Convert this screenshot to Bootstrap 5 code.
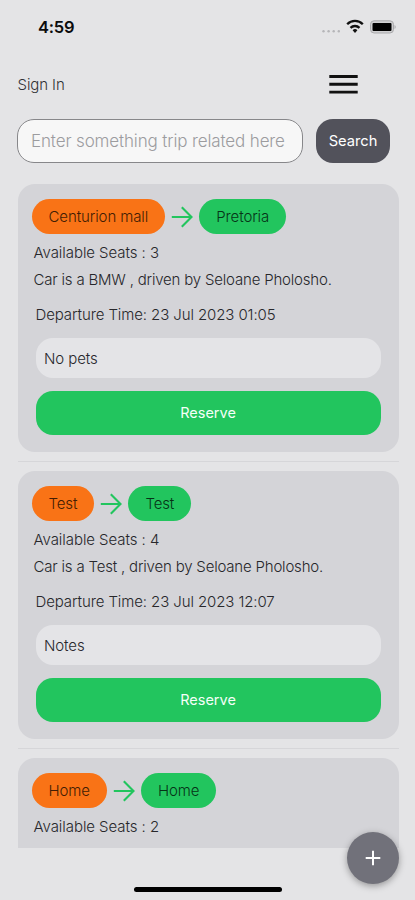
<!DOCTYPE html>
<html lang="en">
<head>
<meta charset="utf-8">
<meta name="viewport" content="width=device-width, initial-scale=1">
<title>Trips</title>
<link href="https://cdn.jsdelivr.net/npm/bootstrap@5.3.0/dist/css/bootstrap.min.css" rel="stylesheet">
<style>
body { font-family: Inter, "Liberation Sans", sans-serif; font-size: 15px; font-weight: 300; letter-spacing: -.1px; line-height: 20px; background: #e4e4e6; color: #27272b; }
.screen { width: 415px; height: 900px; }
.status-bar { height: 62px; padding: 17px 19px 0 38px; color: #0c0c0d; }
.clock { font-size: 16.5px; font-weight: 600; letter-spacing: -.25px; }
.page-head { height: 57px; padding: 0 57px 0 17.5px; }
.sign-in { color: #303034; padding-top: 13px; }
.search-row { padding: 0 25px 0 17px; gap: 13px; height: 44px; }
.search-box { background: #f7f7f7; border: 1px solid #87878a; border-radius: 17px; font-size: 17px; font-weight: 300; letter-spacing: -.13px; padding: 0 13px; height: 44px; }
.search-box:focus { background: #f7f7f7; }
.search-box::placeholder { color: #9c9c9f; opacity: 1; }
.search-btn { width: 74px; height: 44px; border-radius: 17px; background: #52525b; color: #fff; font-size: 14.7px; letter-spacing: 0; }
.trip-list { margin: 21px 16.5px 0 17.5px; height: 663.5px; }
.trip { background: #d4d4d8; border-radius: 17px; height: 268px; padding: 15px 18px 17px 14px; }
.divider { height: 1px; background: #d6d6d9; margin: 9px 0; }
.route { gap: 6px; }
.place { height: 35px; border-radius: 17.5px; padding: 0 17px; }
.from { background: #f97316; color: #421d04; }
.to { background: #22c55e; color: #063317; }
.seats { margin: 9px 0 0 2px; letter-spacing: -.06px; }
.driver { margin: 7px 0 0 2px; letter-spacing: -.19px; }
.departure { margin: 15px 0 0 4px; }
.note { margin: 13px 0 0 4px; height: 40px; border-radius: 17px; background: #e4e4e7; padding: 1px 8.5px 0; }
.reserve { margin: 13px 0 0 4px; height: 44px; border-radius: 17px; background: #22c55e; color: #f4fff8; font-size: 14.5px; letter-spacing: 0; }
.add-btn { right: 16px; bottom: 16px; width: 52px; height: 52px; background: #71717a; box-shadow: 0 2px 7px rgba(0,0,0,.35); }
.home-bar { left: 134px; bottom: 8px; width: 148px; height: 5px; background: #000; }
</style>
<script src="https://cdn.jsdelivr.net/npm/bootstrap@5.3.0/dist/js/bootstrap.bundle.min.js"></script>
</head>
<body>
<div class="screen position-relative overflow-hidden">
  <div class="status-bar d-flex justify-content-between align-items-start">
    <span class="clock">4:59</span>
    <svg width="76" height="20" viewBox="0 0 76 20">
      <g fill="#b5b5b8"><circle cx="3.500" cy="14.200" r="1.200"/><circle cx="8.600" cy="14.200" r="1.200"/><circle cx="13.700" cy="14.200" r="1.200"/><circle cx="18.800" cy="14.200" r="1.200"/></g>
      <g fill="none" stroke="#111" stroke-width="2.3"><path d="M27.2 7.3a10.8 10.8 0 0 1 15.600 0"/><path d="M30.500 10.900a6.300 6.300 0 0 1 9 0"/></g>
      <path d="M32.600 13.200a3.300 3.300 0 0 1 4.800 0L35 15.900z" fill="#111"/>
      <rect x="50.500" y="3.800" width="23" height="12.200" rx="3.600" fill="#d0d0d2" stroke="#a9a9ac"/>
      <rect x="52.500" y="6" width="19" height="8" rx="1" fill="#000"/>
      <path d="M74.600 8v4c1.300-.5 1.300-3.500 0-4z" fill="#9c9c9f"/>
    </svg>
  </div>
  <header class="page-head d-flex justify-content-between align-items-start">
    <span class="sign-in">Sign In</span>
    <svg class="mt-2" width="29" height="28" viewBox="0 0 29 28"><path d="M.3 6.500h28.400M.3 14.300h28.400M.3 22.100h28.400" stroke="#111" stroke-width="2.900"/></svg>
  </header>
  <div class="search-row d-flex">
    <input class="search-box form-control flex-fill" type="text" placeholder="Enter something trip related here">
    <button class="search-btn btn border-0 p-0 flex-shrink-0">Search</button>
  </div>
  <main class="trip-list overflow-hidden">
    <article class="trip d-flex flex-column">
      <div class="route d-flex align-items-center">
        <span class="place from d-flex align-items-center">Centurion mall</span>
        <svg width="22" height="22" viewBox="0 0 22 22" fill="none" stroke="#22c55e" stroke-width="2.100"><path d="M.8 11h19M10.800 1.300l9.700 9.700-9.700 9.700"/></svg>
        <span class="place to d-flex align-items-center">Pretoria</span>
      </div>
      <div class="seats">Available Seats : 3</div>
      <div class="driver">Car is a BMW , driven by Seloane Pholosho.</div>
      <div class="departure">Departure Time: 23 Jul 2023 01:05</div>
      <div class="note d-flex align-items-center">No pets</div>
      <button class="reserve btn border-0 p-0">Reserve</button>
    </article>
    <div class="divider"></div>
    <article class="trip d-flex flex-column">
      <div class="route d-flex align-items-center">
        <span class="place from d-flex align-items-center">Test</span>
        <svg width="22" height="22" viewBox="0 0 22 22" fill="none" stroke="#22c55e" stroke-width="2.100"><path d="M.8 11h19M10.800 1.300l9.700 9.700-9.700 9.700"/></svg>
        <span class="place to d-flex align-items-center">Test</span>
      </div>
      <div class="seats">Available Seats : 4</div>
      <div class="driver">Car is a Test , driven by Seloane Pholosho.</div>
      <div class="departure">Departure Time: 23 Jul 2023 12:07</div>
      <div class="note d-flex align-items-center">Notes</div>
      <button class="reserve btn border-0 p-0">Reserve</button>
    </article>
    <div class="divider"></div>
    <article class="trip d-flex flex-column">
      <div class="route d-flex align-items-center">
        <span class="place from d-flex align-items-center">Home</span>
        <svg width="22" height="22" viewBox="0 0 22 22" fill="none" stroke="#22c55e" stroke-width="2.100"><path d="M.8 11h19M10.800 1.300l9.700 9.700-9.700 9.700"/></svg>
        <span class="place to d-flex align-items-center">Home</span>
      </div>
      <div class="seats">Available Seats : 2</div>
    </article>
  </main>
  <button class="add-btn btn rounded-circle border-0 p-0 position-absolute d-flex align-items-center justify-content-center" aria-label="Add trip">
    <svg width="16" height="16" viewBox="0 0 16 16"><path d="M8 .7v14.600M.7 8h14.600" stroke="#fff" stroke-width="2"/></svg>
  </button>
  <div class="home-bar position-absolute rounded-pill"></div>
</div>
</body>
</html>
